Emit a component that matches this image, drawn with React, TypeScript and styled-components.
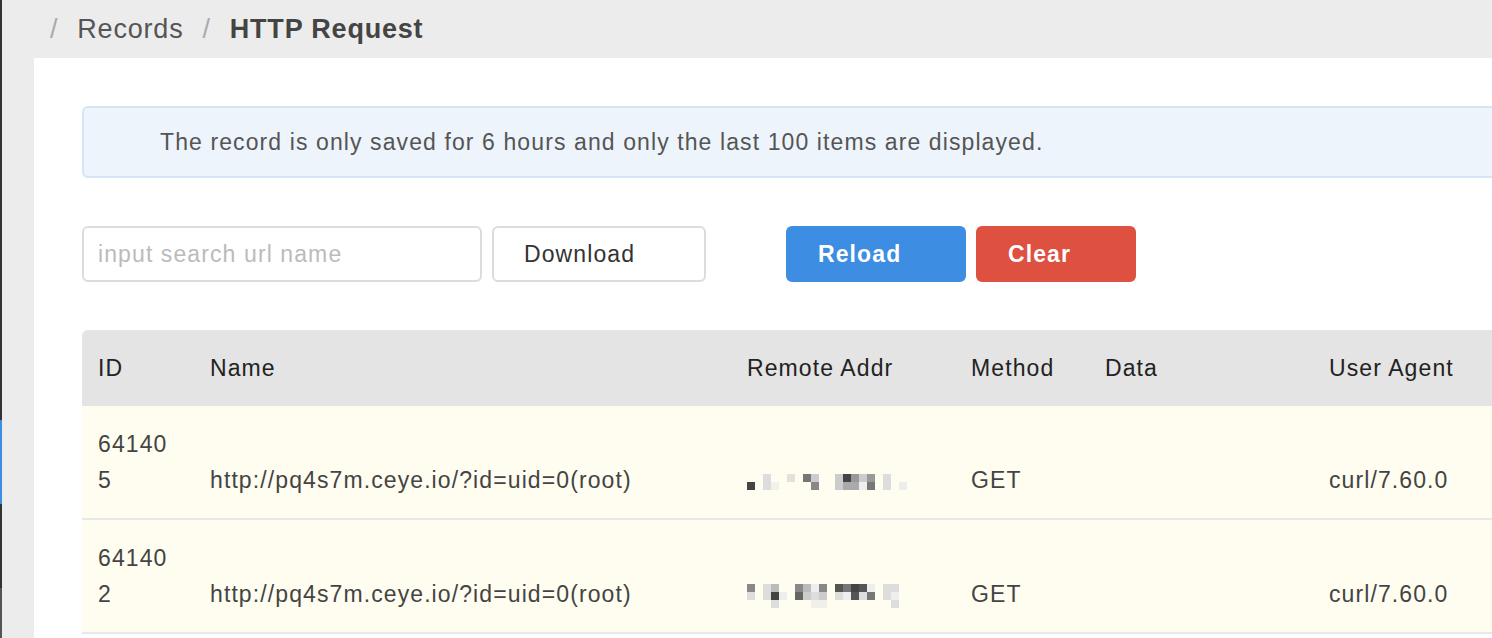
import React from 'react';
import styled, { createGlobalStyle } from 'styled-components';

const GlobalStyle = createGlobalStyle`
  html, body {
    margin: 0;
    padding: 0;
    background: #ececec;
    overflow: hidden;
  }
  body {
    font-family: "Liberation Sans", Arial, sans-serif;
  }
`;

const Page = styled.div`
  display: flex;
  height: 638px;
  width: 1900px;
  overflow: hidden;
`;

const SideEdge = styled.div`
  width: 2px;
  flex-shrink: 0;
  display: flex;
  flex-direction: column;
`;

const EdgePart = styled.div<{ h?: number; color: string }>`
  height: ${(p) => (p.h ? `${p.h}px` : 'auto')};
  flex: ${(p) => (p.h ? '0 0 auto' : '1')};
  background: ${(p) => p.color};
`;

const Main = styled.div`
  flex: 1;
  display: flex;
  flex-direction: column;
  min-height: 0;
`;

const Breadcrumb = styled.div`
  height: 58px;
  flex-shrink: 0;
  display: flex;
  align-items: center;
  padding-left: 48px;
  font-size: 27px;
  letter-spacing: 0.8px;
  color: #555;
`;

const Sep = styled.span`
  color: #aaa;
  margin: 0 19px 0 0;
  &:not(:first-child) {
    margin-left: 19px;
  }
`;

const Crumb = styled.span<{ current?: boolean }>`
  color: ${(p) => (p.current ? '#444' : '#555')};
  font-weight: ${(p) => (p.current ? 700 : 400)};
`;

const Panel = styled.div`
  flex: 1;
  min-height: 0;
  margin-left: 32px;
  background: #fff;
  padding: 48px;
  display: flex;
  flex-direction: column;
  gap: 48px;
  font-size: 23px;
  letter-spacing: 1.1px;
`;

const Alert = styled.div`
  height: 72px;
  flex-shrink: 0;
  box-sizing: border-box;
  background: #edf4fc;
  border: 2px solid #d4e6f6;
  border-radius: 6px;
  display: flex;
  align-items: center;
  padding-left: 76px;
  color: #555;
`;

const Controls = styled.div`
  display: flex;
  align-items: center;
  height: 56px;
  flex-shrink: 0;
`;

const SearchInput = styled.input`
  width: 400px;
  height: 56px;
  box-sizing: border-box;
  border: 2px solid #dcdcdc;
  border-radius: 6px;
  padding: 0 14px;
  font-family: inherit;
  font-size: 23px;
  letter-spacing: 1.1px;
  color: #333;
  outline: none;
  &::placeholder {
    color: #bbb;
  }
`;

const Button = styled.button<{ tone?: 'default' | 'primary' | 'danger'; w: number; gapLeft: number }>`
  width: ${(p) => p.w}px;
  height: 56px;
  margin-left: ${(p) => p.gapLeft}px;
  box-sizing: border-box;
  border-radius: 6px;
  display: flex;
  align-items: center;
  padding: 0 30px;
  font-family: inherit;
  font-size: 23px;
  letter-spacing: 1.1px;
  cursor: pointer;
  border: 2px solid
    ${(p) => (p.tone === 'primary' ? '#3d8ee2' : p.tone === 'danger' ? '#de5040' : '#dcdcdc')};
  background: ${(p) => (p.tone === 'primary' ? '#3d8ee2' : p.tone === 'danger' ? '#de5040' : '#fff')};
  color: ${(p) => (p.tone === 'default' || !p.tone ? '#333' : '#fff')};
  font-weight: ${(p) => (p.tone === 'default' || !p.tone ? 400 : 700)};
`;

const Table = styled.table`
  border-collapse: collapse;
  table-layout: fixed;
  width: 1700px;
  flex-shrink: 0;
`;

const HeadRow = styled.tr`
  background: #e4e4e4;
`;

const Th = styled.th`
  text-align: left;
  font-weight: 400;
  color: #222;
  padding: 20px 16px;
  line-height: 36px;
  &:first-child {
    border-top-left-radius: 6px;
  }
`;

const BodyRow = styled.tr`
  background: #fefdf0;
  border-bottom: 2px solid #e8e8e8;
`;

const Td = styled.td<{ narrow?: boolean }>`
  vertical-align: bottom;
  color: #444;
  padding: 20px ${(p) => (p.narrow ? '20px' : '16px')} 20px 16px;
  line-height: 36px;
  word-break: break-all;
`;

type Block = [number, number, string];

const PixelAddr: React.FC<{ blocks: Block[]; rows: number }> = ({ blocks, rows }) => (
  <svg width={168} height={rows * 8} viewBox={`0 0 168 ${rows * 8}`} style={{ verticalAlign: 'middle' }}>
    {blocks.map(([c, r, color], i) => (
      <rect key={i} x={c * 8} y={r * 8} width={8} height={8} fill={color} />
    ))}
  </svg>
);

const addrA: Block[] = [
  [0, 1, '#444'],
  [2, 0, '#ddd'], [2, 1, '#ddd'],
  [3, 1, '#f2f2ea'],
  [5, 0, '#e2e2da'],
  [7, 0, '#777'], [8, 0, '#ccc'], [8, 1, '#888'],
  [11, 0, '#ccc'], [11, 1, '#ccc'],
  [12, 0, '#444'], [12, 1, '#aaa'],
  [13, 0, '#999'], [13, 1, '#aaa'],
  [14, 0, '#ccc'], [14, 1, '#eee'],
  [15, 0, '#999'], [15, 1, '#777'],
  [17, 0, '#ddd'], [17, 1, '#ddd'],
  [19, 1, '#eee'],
];

const addrB: Block[] = [
  [0, 0, '#888'], [0, 1, '#ddd'],
  [2, 0, '#ddd'], [2, 1, '#ddd'],
  [3, 0, '#bbb'], [3, 1, '#444'], [3, 2, '#ddd'],
  [4, 1, '#eee'],
  [6, 0, '#888'], [6, 1, '#666'],
  [7, 0, '#bbb'], [7, 1, '#ccc'],
  [8, 0, '#eee'], [8, 1, '#ddd'], [8, 2, '#f0f0e8'],
  [9, 0, '#888'], [9, 1, '#ccc'], [9, 2, '#f0f0e8'],
  [11, 0, '#555'], [11, 1, '#ddd'],
  [12, 0, '#777'], [12, 1, '#eee'],
  [13, 0, '#444'], [13, 1, '#555'],
  [14, 0, '#555'], [14, 1, '#ddd'],
  [15, 0, '#eee'], [15, 1, '#777'],
  [17, 0, '#ddd'], [17, 1, '#ddd'],
  [18, 0, '#ddd'], [18, 1, '#eee'], [18, 2, '#ddd'],
];

const records = [
  { id: '641405', name: 'http://pq4s7m.ceye.io/?id=uid=0(root)', addr: addrA, rows: 2, method: 'GET', data: '', ua: 'curl/7.60.0' },
  { id: '641402', name: 'http://pq4s7m.ceye.io/?id=uid=0(root)', addr: addrB, rows: 3, method: 'GET', data: '', ua: 'curl/7.60.0' },
];

export default function App() {
  return (
    <>
      <GlobalStyle />
      <Page>
        <SideEdge>
          <EdgePart h={420} color="#333" />
          <EdgePart h={84} color="#3d8ee2" />
          <EdgePart h={84} color="#333" />
          <EdgePart color="#555" />
        </SideEdge>
        <Main>
          <Breadcrumb>
            <Sep>/</Sep>
            <Crumb>Records</Crumb>
            <Sep>/</Sep>
            <Crumb current>HTTP Request</Crumb>
          </Breadcrumb>
          <Panel>
            <Alert>The record is only saved for 6 hours and only the last 100 items are displayed.</Alert>
            <Controls>
              <SearchInput placeholder="input search url name" />
              <Button tone="default" w={214} gapLeft={10}>Download</Button>
              <Button tone="primary" w={180} gapLeft={80}>Reload</Button>
              <Button tone="danger" w={160} gapLeft={10}>Clear</Button>
            </Controls>
            <Table>
              <colgroup>
                <col style={{ width: 112 }} />
                <col style={{ width: 537 }} />
                <col style={{ width: 224 }} />
                <col style={{ width: 134 }} />
                <col style={{ width: 224 }} />
                <col />
              </colgroup>
              <thead>
                <HeadRow>
                  <Th>ID</Th>
                  <Th>Name</Th>
                  <Th>Remote Addr</Th>
                  <Th>Method</Th>
                  <Th>Data</Th>
                  <Th>User Agent</Th>
                </HeadRow>
              </thead>
              <tbody>
                {records.map((r) => (
                  <BodyRow key={r.id}>
                    <Td narrow>{r.id}</Td>
                    <Td>{r.name}</Td>
                    <Td>
                      <PixelAddr blocks={r.addr} rows={r.rows} />
                    </Td>
                    <Td>{r.method}</Td>
                    <Td>{r.data}</Td>
                    <Td>{r.ua}</Td>
                  </BodyRow>
                ))}
              </tbody>
            </Table>
          </Panel>
        </Main>
      </Page>
    </>
  );
}
